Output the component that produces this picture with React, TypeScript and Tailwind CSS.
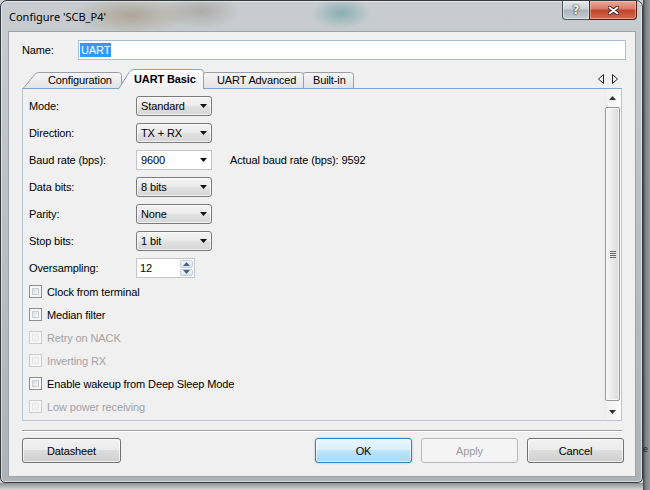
import React from 'react'

const sans = "font-['Liberation_Sans',Arial,sans-serif]"

function DownTri({ color = '#111' }: { color?: string }) {
  return (
    <svg width="7" height="4" viewBox="0 0 7 4">
      <polygon points="0,0 7,0 3.5,4" fill={color} />
    </svg>
  )
}

function UpTri({ color = '#111' }: { color?: string }) {
  return (
    <svg width="7" height="4" viewBox="0 0 7 4">
      <polygon points="0,4 7,4 3.5,0" fill={color} />
    </svg>
  )
}

function Combo({ value }: { value: string }) {
  return (
    <div className="flex h-[20px] w-[76px] items-center rounded-[3px] border border-[#7a7a7a] bg-[linear-gradient(#f4f4f4,#ececec_45%,#e0e0e0_55%,#d6d6d6)] pl-[4px] pr-[4px] shadow-[inset_0_0_0_1px_rgba(255,255,255,0.7)]">
      <span className="flex-1 leading-[14px]">{value}</span>
      <DownTri />
    </div>
  )
}

function EditCombo({ value }: { value: string }) {
  return (
    <div className="flex h-[20px] w-[76px] items-center border border-[#c3c6cb] bg-white pl-[4px] pr-[4px]">
      <span className="flex-1 leading-[14px]">{value}</span>
      <DownTri />
    </div>
  )
}

function Spin({ value }: { value: string }) {
  return (
    <div className="flex h-[20px] w-[59px] border border-[#c3c6cb] bg-white">
      <span className="flex flex-1 items-center pl-[3px] leading-[14px]">{value}</span>
      <div className="flex w-[15px] flex-col gap-px p-px">
        <div className="flex flex-1 items-center justify-center rounded-[2px] border border-[#c2ccd8] bg-[linear-gradient(#f4f7fa,#dde5ee)]">
          <UpTri color="#4a6388" />
        </div>
        <div className="flex flex-1 items-center justify-center rounded-[2px] border border-[#c2ccd8] bg-[linear-gradient(#f4f7fa,#dde5ee)]">
          <DownTri color="#4a6388" />
        </div>
      </div>
    </div>
  )
}

function Check({ label, disabled }: { label: string; disabled?: boolean }) {
  return (
    <div className="flex h-[13px] items-center gap-[5px]">
      <div
        className={
          disabled
            ? 'h-[13px] w-[13px] border border-[#cdcdcd] bg-[#f6f6f6] p-[2px]'
            : 'h-[13px] w-[13px] border border-[#8e8f8f] bg-[#f6f6f6] p-[2px]'
        }
      >
        <div
          className={
            disabled
              ? 'h-full w-full border border-[#e6e6e6] bg-[#f2f2f2]'
              : 'h-full w-full border border-[#cbced2] bg-[linear-gradient(135deg,#d9dce0,#f8f8f8)]'
          }
        />
      </div>
      <span className={disabled ? 'leading-[14px] text-[#a3a3a3]' : 'leading-[14px]'}>{label}</span>
    </div>
  )
}

function TabShape({ w, h, active, id }: { w: number; h: number; active?: boolean; id: string }) {
  const s = 14
  const d = `M0.5,${h} L${s - 3},3.5 Q${s - 1.5},0.5 ${s + 2},0.5 L${w - 3.5},0.5 Q${w - 0.5},0.5 ${w - 0.5},3.5 L${w - 0.5},${h}`
  return (
    <svg width={w} height={h} className="absolute inset-0">
      <defs>
        <linearGradient id={id} x1="0" y1="0" x2="0" y2="1">
          <stop offset="0" stopColor={active ? '#ffffff' : '#f6f6f6'} />
          <stop offset="1" stopColor={active ? '#f0f0f0' : '#e3e3e3'} />
        </linearGradient>
      </defs>
      <path d={d + ' Z'} fill={`url(#${id})`} />
      <path d={d} fill="none" stroke={active ? '#7ea4cf' : '#9a9ea4'} strokeWidth="1" />
    </svg>
  )
}

function Tabs() {
  return (
    <div className="relative z-10 flex h-[29px] items-end pl-[14px]">
      <div className="relative z-30 mb-px flex h-[16px] w-[99px] shrink-0 items-center pl-[25px]">
        <TabShape w={99} h={16} id="t1" />
        <span className="relative leading-[14px]">Configuration</span>
      </div>
      <div className="relative z-40 -ml-[4px] flex h-[20px] w-[86px] shrink-0 items-center pb-px pl-[16px]">
        <TabShape w={86} h={20} active id="t2" />
        <span className="relative font-bold leading-[14px]">UART Basic</span>
      </div>
      <div className="relative z-20 -ml-[14px] mb-px flex h-[16px] w-[114px] shrink-0 items-center pl-[27px]">
        <TabShape w={114} h={16} id="t3" />
        <span className="relative leading-[14px]">UART Advanced</span>
      </div>
      <div className="relative z-10 -ml-[14px] mb-px flex h-[16px] w-[64px] shrink-0 items-center pl-[23px]">
        <TabShape w={64} h={16} id="t4" />
        <span className="relative leading-[14px]">Built-in</span>
      </div>
      <div className="mb-[5px] ml-auto mr-[17px] flex gap-[8px]">
        <svg width="6" height="10" viewBox="0 0 6 10">
          <path d="M5.5,0.5 L0.5,5 L5.5,9.5 Z" fill="none" stroke="#222" />
        </svg>
        <svg width="6" height="10" viewBox="0 0 6 10">
          <path d="M0.5,0.5 L5.5,5 L0.5,9.5 Z" fill="none" stroke="#222" />
        </svg>
      </div>
    </div>
  )
}

function Row({ label, children }: { label: string; children: React.ReactNode }) {
  return (
    <div className="flex h-[20px] items-center">
      <span className="w-[107px] leading-[14px]">{label}</span>
      {children}
    </div>
  )
}

function ScrollBar() {
  return (
    <div className="flex w-[17px] flex-col bg-[linear-gradient(90deg,#ececec,#f4f4f4_30%,#f6f6f6_70%,#fdfdfd)]">
      <div className="flex h-[17px] items-center justify-center">
        <UpTri color="#333" />
      </div>
      <div className="mx-px mt-px flex h-[294px] items-center justify-center rounded-[2px] border border-[#979797] bg-[linear-gradient(90deg,#f6f6f6,#e9e9e9_50%,#dadada)] shadow-[inset_0_0_0_1px_rgba(255,255,255,0.6)]">
        <div className="flex flex-col gap-px">
          <div className="h-px w-[6px] bg-[#666]" />
          <div className="h-px w-[6px] bg-[#666]" />
          <div className="h-px w-[6px] bg-[#666]" />
          <div className="h-px w-[6px] bg-[#666]" />
        </div>
      </div>
      <div className="flex-1" />
      <div className="flex h-[17px] items-center justify-center">
        <DownTri color="#333" />
      </div>
    </div>
  )
}

const btn = 'flex h-full items-center justify-center rounded-[3px] border leading-[14px]'
const btnNormal =
  'border-[#707070] bg-[linear-gradient(#f2f2f2,#ebebeb_50%,#dddddd_50%,#cfcfcf)] shadow-[inset_0_0_0_1px_rgba(255,255,255,0.75)]'

export default function App() {
  return (
    <div className={`flex h-[490px] w-[650px] overflow-hidden bg-[#cfd0d1] text-[11px] tracking-[-0.12px] text-black ${sans}`}>
      <div className="flex w-[643px] shrink-0 flex-col">
        {/* window */}
        <div className="flex h-[483px] flex-col rounded-t-[7px] rounded-b-[5px] border border-[#343a40] bg-[radial-gradient(ellipse_60px_20px_at_130px_14px,rgba(140,120,80,0.45),transparent),radial-gradient(ellipse_30px_16px_at_340px_12px,rgba(60,140,140,0.45),transparent),radial-gradient(ellipse_40px_18px_at_200px_10px,rgba(120,110,90,0.35),transparent),linear-gradient(#c9cdd1,#bcc1c6_40%,#aeb3b8)] shadow-[inset_0_0_0_1px_rgba(255,255,255,0.5)]">
          {/* title bar */}
          <div className="flex h-[30px] items-start">
            <div className="pl-[8px] pt-[9px] font-['Noto_Sans',sans-serif] text-[11px] leading-[14px] tracking-normal text-black">
              Configure 'SCB_P4'
            </div>
            <div className="ml-auto mr-[5px] flex h-[19px]">
              <div className="flex w-[28px] items-center justify-center rounded-bl-[4px] border border-t-0 border-[#4c535b] bg-[linear-gradient(#e6e9ec,#cbd0d5_45%,#aab1b9_50%,#c7ced4)] shadow-[inset_0_0_0_1px_rgba(255,255,255,0.45)]">
                <span className="font-['DejaVu_Sans',sans-serif] text-[12px] font-bold leading-none text-white [text-shadow:0_0_2px_#222,0_0_1px_#222]">
                  ?
                </span>
              </div>
              <div className="-ml-px flex w-[48px] items-center justify-center rounded-br-[4px] border border-t-0 border-[#4d2219] bg-[linear-gradient(#eaa696,#d87b66_45%,#c2422a_50%,#d46b4e)] shadow-[inset_0_0_0_1px_rgba(255,220,210,0.45)]">
                <svg width="11" height="9" viewBox="0 0 11 9">
                  <path d="M1.5,1.5 L9.5,7.5 M9.5,1.5 L1.5,7.5" stroke="#3a1a14" strokeWidth="3.6" strokeLinecap="round" />
                  <path d="M1.5,1.5 L9.5,7.5 M9.5,1.5 L1.5,7.5" stroke="#ffffff" strokeWidth="2" strokeLinecap="round" />
                </svg>
              </div>
            </div>
          </div>

          {/* client area */}
          <div className="ml-[7px] flex h-[446px] w-[628px] flex-col border border-[#9ba2a9] bg-[#f0f0f0]">
            <div className="ml-[13px] mr-[9px] mt-[8px] flex h-[20px] items-center">
              <span className="w-[56px] leading-[14px]">Name:</span>
              <div className="flex h-full flex-1 items-center border border-[#a9c0d8] bg-white pl-px">
                <span className="bg-[#3399ff] px-px leading-[14px] text-white">UART</span>
              </div>
            </div>

            <Tabs />

            <div className="relative z-0 mx-[13px] -mt-px flex h-[333px] border border-[#b7c4d1] border-t-[#7ea4cf] bg-[#f0f0f0]">
              <div className="flex flex-1 flex-col pl-[6px] pt-[7px]">
                <div className="flex flex-col gap-[7px]">
                  <Row label="Mode:">
                    <Combo value="Standard" />
                  </Row>
                  <Row label="Direction:">
                    <Combo value="TX + RX" />
                  </Row>
                  <Row label="Baud rate (bps):">
                    <EditCombo value="9600" />
                    <span className="ml-[18px] leading-[14px]">Actual baud rate (bps): 9592</span>
                  </Row>
                  <Row label="Data bits:">
                    <Combo value="8 bits" />
                  </Row>
                  <Row label="Parity:">
                    <Combo value="None" />
                  </Row>
                  <Row label="Stop bits:">
                    <Combo value="1 bit" />
                  </Row>
                  <Row label="Oversampling:">
                    <Spin value="12" />
                  </Row>
                </div>
                <div className="mt-[7px] flex flex-col gap-[10px]">
                  <Check label="Clock from terminal" />
                  <Check label="Median filter" />
                  <Check label="Retry on NACK" disabled />
                  <Check label="Inverting RX" disabled />
                  <Check label="Enable wakeup from Deep Sleep Mode" />
                  <Check label="Low power receiving" disabled />
                </div>
              </div>
              <ScrollBar />
            </div>

            <div className="mx-[13px] mt-[9px] border-t border-b border-t-[#a0a0a0] border-b-white" />

            <div className="mt-[6px] flex h-[25px] pl-[13px] pr-[11px]">
              <div className={`${btn} ${btnNormal} w-[99px]`}>Datasheet</div>
              <div className="ml-auto flex h-full gap-[9px]">
                <div className={`${btn} w-[97px] border-[#3c7fb1] bg-[linear-gradient(#eaf6fd,#d9f0fc_50%,#bee6fd_50%,#a7d9f5)] shadow-[inset_0_0_0_1px_rgba(255,255,255,0.6),0_0_2px_rgba(60,127,177,0.5)]`}>
                  OK
                </div>
                <div className={`${btn} w-[97px] border-[#b5b9bd] bg-[#f4f4f4] text-[#9a9a9a]`}>Apply</div>
                <div className={`${btn} ${btnNormal} w-[97px]`}>Cancel</div>
              </div>
            </div>
          </div>
        </div>
        <div className="flex-1 bg-[linear-gradient(#8e9194,#d5d6d7)]" />
      </div>
      <div className="flex-1 bg-[linear-gradient(90deg,#3f4245,#7d8083_35%,#9a9c9e)] pt-[445px] text-[9px] leading-none text-[#222]">
        e
      </div>
    </div>
  )
}
